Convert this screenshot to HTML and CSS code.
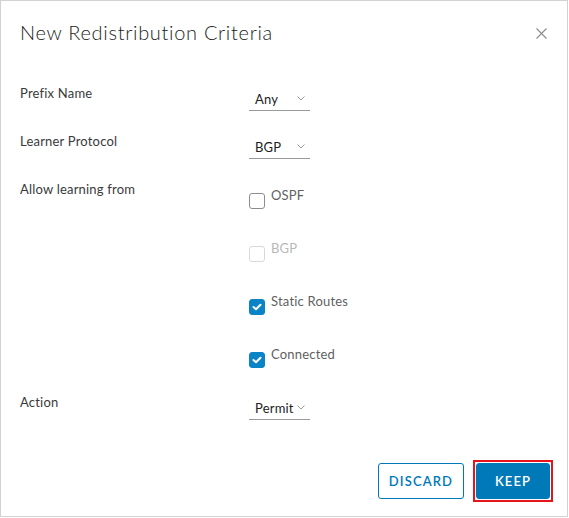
FILE: index.html
```html
<!DOCTYPE html>
<html>
<head>
<meta charset="utf-8">
<link rel="stylesheet" href="styles.css">
</head>
<body>
<div class="modal">
  <div class="modal-header">
    <h3 class="modal-title">New Redistribution Criteria</h3>
    <button class="close" type="button" aria-label="Close">
      <svg width="11" height="11" viewBox="0 0 11 11"><path d="M0.5 0.5 L10.5 10.5 M10.5 0.5 L0.5 10.5" stroke="#8c8c8c" stroke-width="1.1" fill="none"/></svg>
    </button>
  </div>
  <form class="modal-body">
    <div class="row">
      <label class="lbl">Prefix Name</label>
      <div class="ctl">
        <div class="select"><span class="val">Any</span><svg class="chev" width="8" height="5" viewBox="0 0 8 5"><polyline points="0.5,0.5 4,4 7.5,0.5" stroke="#9a9a9a" fill="none"/></svg></div>
      </div>
    </div>
    <div class="row">
      <label class="lbl">Learner Protocol</label>
      <div class="ctl">
        <div class="select"><span class="val">BGP</span><svg class="chev" width="8" height="5" viewBox="0 0 8 5"><polyline points="0.5,0.5 4,4 7.5,0.5" stroke="#9a9a9a" fill="none"/></svg></div>
      </div>
    </div>
    <div class="row row-checks">
      <label class="lbl">Allow learning from</label>
      <div class="ctl checks">
        <div class="check"><span class="box"></span><span class="clabel">OSPF</span></div>
        <div class="check disabled"><span class="box"></span><span class="clabel">BGP</span></div>
        <div class="check checked"><span class="box"><svg width="10" height="8" viewBox="0 0 10 8"><polyline points="1.5,4 4,6.3 8.5,1.7" stroke="#fff" stroke-width="2" fill="none" stroke-linecap="round" stroke-linejoin="round"/></svg></span><span class="clabel">Static Routes</span></div>
        <div class="check checked"><span class="box"><svg width="10" height="8" viewBox="0 0 10 8"><polyline points="1.5,4 4,6.3 8.5,1.7" stroke="#fff" stroke-width="2" fill="none" stroke-linecap="round" stroke-linejoin="round"/></svg></span><span class="clabel">Connected</span></div>
      </div>
    </div>
    <div class="row">
      <label class="lbl">Action</label>
      <div class="ctl">
        <div class="select"><span class="val">Permit</span><svg class="chev" width="8" height="5" viewBox="0 0 8 5"><polyline points="0.5,0.5 4,4 7.5,0.5" stroke="#9a9a9a" fill="none"/></svg></div>
      </div>
    </div>
  </form>
  <div class="modal-footer">
    <button class="btn btn-outline" type="button">Discard</button>
    <span class="highlight"><button class="btn btn-primary" type="button">Keep</button></span>
  </div>
</div>
</body>
</html>
```
FILE: styles.css
```css
html, body {
  margin: 0;
  padding: 0;
  background: #fff;
}
body {
  font-family: Lato, "Liberation Sans", sans-serif;
  color: #333;
}
.modal {
  box-sizing: border-box;
  width: 568px;
  height: 517px;
  border: 1px solid #d2d2d2;
  padding: 19px 14px 0 19px;
  display: flex;
  flex-direction: column;
}
.modal-header {
  display: flex;
  align-items: flex-start;
}
.modal-title {
  margin: 0;
  font-size: 20px;
  line-height: 24px;
  font-weight: 300;
  letter-spacing: 0.7px;
  color: #222;
  flex: 1;
}
.close {
  border: 0;
  background: none;
  padding: 0;
  margin: 8px 6px 0 0;
  width: 11px;
  height: 11px;
  display: block;
  cursor: pointer;
}
.close svg { display: block; }
.modal-body {
  margin: 40px 0 0 0;
  display: flex;
  flex-direction: column;
}
.row {
  display: flex;
  align-items: flex-start;
  height: 48px;
}
.row-checks {
  height: auto;
  padding-bottom: 30px;
}
.lbl {
  width: 229px;
  font-size: 13px;
  line-height: 18px;
  letter-spacing: 0.2px;
  color: #3a3a3a;
}
.ctl {
  display: flex;
  flex-direction: column;
}
.select {
  box-sizing: border-box;
  width: 61px;
  margin-top: 6px;
  padding: 0 5px 2px 6px;
  border-bottom: 1px solid #9a9a9a;
  display: flex;
  justify-content: space-between;
  align-items: flex-start;
}
.val {
  font-size: 13px;
  line-height: 18px;
  letter-spacing: 0.2px;
  color: #222;
}
.chev {
  display: block;
  margin-top: 6px;
}
.checks {
  padding-top: 6px;
  gap: 35px;
}
.check {
  display: flex;
  align-items: flex-start;
  height: 18px;
}
.box {
  box-sizing: border-box;
  width: 16px;
  height: 16px;
  margin-top: 7px;
  border: 1px solid #8c8c8c;
  border-radius: 3px;
  background: #fff;
  display: flex;
  align-items: center;
  justify-content: center;
}
.box svg { display: block; }
.check.checked .box {
  border-color: #0a84c6;
  background: #0a84c6;
}
.check.disabled .box { border-color: #d8d8d8; }
.clabel {
  margin-left: 6px;
  font-size: 13px;
  line-height: 18px;
  letter-spacing: 0.2px;
  color: #5f5f5f;
}
.check.disabled .clabel { color: #b8b8b8; }
.modal-footer {
  margin-top: 19px;
  display: flex;
  justify-content: flex-end;
  align-items: center;
  gap: 9px;
}
.btn {
  box-sizing: border-box;
  height: 36px;
  min-width: 74px;
  padding: 0 10px;
  border-radius: 3px;
  font-family: Lato, "Liberation Sans", sans-serif;
  font-size: 13px;
  font-weight: 600;
  letter-spacing: 1.1px;
  text-transform: uppercase;
  cursor: pointer;
  display: block;
}
.btn-outline {
  border: 1px solid #0079b8;
  background: #fff;
  color: #0079b8;
}
.highlight {
  display: block;
  border: 2px solid #e8141b;
  padding: 1px;
}
.btn-primary {
  border: 1px solid #0079b8;
  background: #0079b8;
  color: #fff;
}
```
